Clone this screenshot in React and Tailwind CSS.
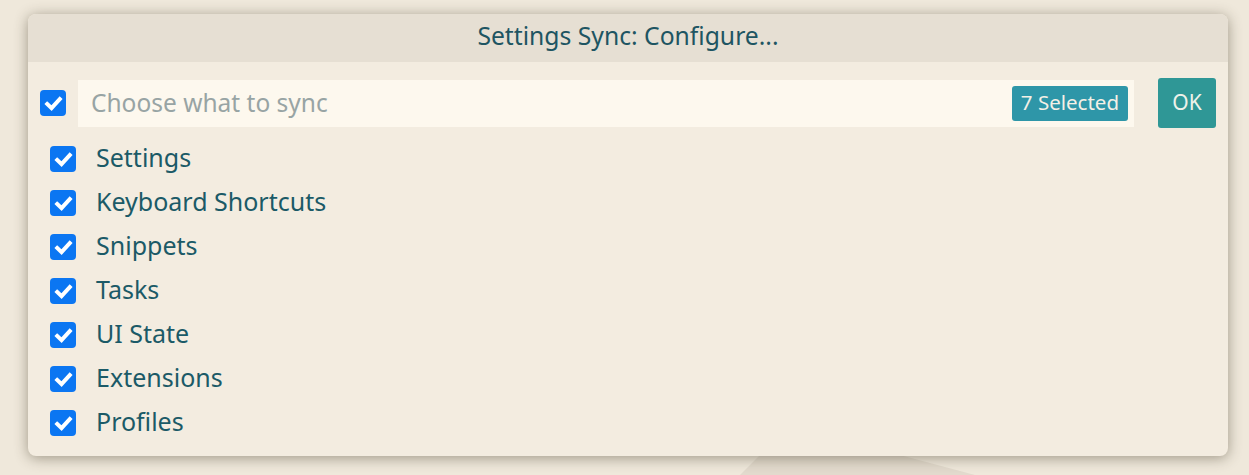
import React from "react";

const ITEMS = [
	"Settings",
	"Keyboard Shortcuts",
	"Snippets",
	"Tasks",
	"UI State",
	"Extensions",
	"Profiles",
];

function Check({ className }) {
	return (
		<span
			className={
				"flex items-center justify-center w-[26px] h-[26px] rounded-[4px] bg-[#0b76f2] shrink-0 " +
				(className || "")
			}
		>
			<svg viewBox="0 0 16 16" className="w-[21px] h-[21px]" fill="none">
				<path
					d="M3.2 8.4 L6.5 11.5 L12.8 4.6"
					stroke="#ffffff"
					strokeWidth="3"
					strokeLinecap="square"
				/>
			</svg>
		</span>
	);
}

function App() {
	return (
		<div
			className="relative w-[1249px] h-[475px] overflow-hidden bg-[#efe8db]"
			style={{ fontFamily: '"Noto Sans", "Open Sans", sans-serif' }}
		>
			{/* background shape behind the dialog */}
			<svg
				className="absolute left-0 top-0"
				width="1249"
				height="475"
				viewBox="0 0 1249 475"
			>
				<polygon points="760,455 900,455 975,475 740,475" fill="#e2dacd" />
			</svg>

			<div className="relative ml-[28px] mt-[14px] w-[1200px] rounded-[8px] bg-[#f3ece0] shadow-[0_2px_14px_rgba(60,50,30,0.45)] overflow-hidden">
				<div className="h-[48px] pb-[4px] flex items-center justify-center bg-[#e6dfd3] text-[24.7px] leading-none text-[#1e5562]">
					Settings Sync: Configure...
				</div>

				<div className="flex items-center pl-[12px] pr-[12px] pt-[16px]">
					<Check />
					<div className="ml-[12px] flex items-center h-[47px] w-[1056px] bg-[#fdf8ee] pl-[13px] pr-[6px]">
						<span className="flex-1 text-[24.5px] leading-none text-[#98a4a4]">
							Choose what to sync
						</span>
						<span className="h-[35px] px-[9px] pb-[2px] flex items-center rounded-[3px] bg-[#2e96a8] text-[20.5px] leading-none text-[#f4f0e6]">
							7 Selected
						</span>
					</div>
					<button className="ml-[24px] w-[58px] h-[50px] pb-[2px] rounded-[3px] bg-[#2f9796] text-[21px] leading-none text-[#eef2ea] flex items-center justify-center">
						OK
					</button>
				</div>

				<ul className="pt-[9px] pb-[11px]">
					{ITEMS.map((item) => (
						<li key={item} className="h-[44px] flex items-center pl-[22px]">
							<Check />
							<span className="ml-[20px] mb-[4px] text-[25px] leading-none text-[#1b5a67]">
								{item}
							</span>
						</li>
					))}
				</ul>
			</div>
		</div>
	);
}

export default App;
